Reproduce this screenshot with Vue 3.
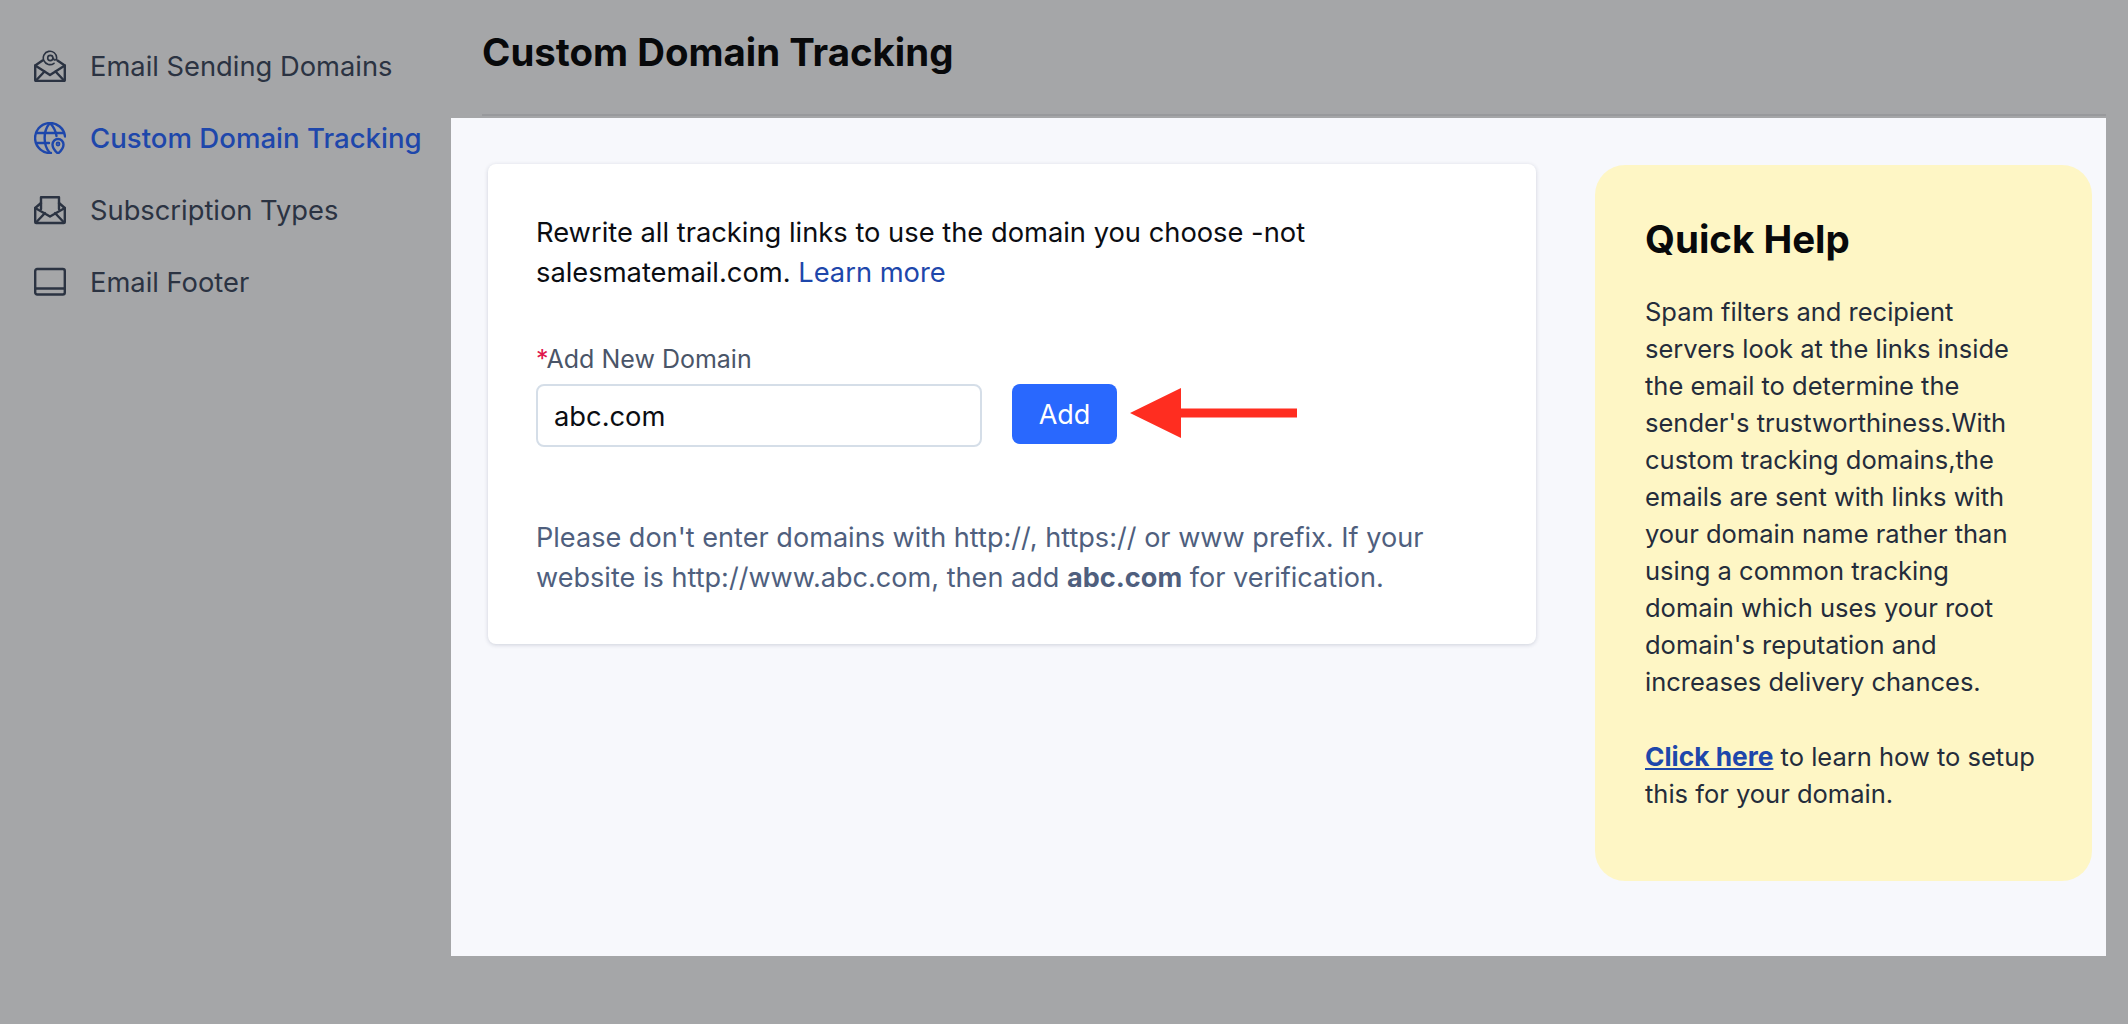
<script setup>
const helpText = "Spam filters and recipient servers look at the links inside the email to determine the sender's trustworthiness.With custom tracking domains,the emails are sent with links with your domain name rather than using a common tracking domain which uses your root domain's reputation and increases delivery chances."
</script>

<template>
  <div class="page">
    <aside class="sidebar">
      <a class="nav-item">
        <svg class="nav-icon" viewBox="0 0 32 32" fill="none" stroke="currentColor" stroke-width="2.400" stroke-linejoin="round" stroke-linecap="round">
          <path d="M8.500 10.500 1.200 15.500V30a1 1 0 0 0 1 1h27.600a1 1 0 0 0 1-1V15.500l-7.300-5" />
          <path d="M1.200 15.500 16 25l14.800-9.500" />
          <path d="M2 30.500 10.500 21.500M30 30.500 21.500 21.500" />
          <path d="M20 13.300A6.700 6.700 0 1 1 22.700 8c0 2.500-3.200 2.700-3.200 .2" stroke-width="1.600" />
          <circle cx="16.300" cy="8" r="2.600" stroke-width="1.600" />
        </svg>
        <span>Email Sending Domains</span>
      </a>
      <a class="nav-item active">
        <svg class="nav-icon" viewBox="0 0 32 32" fill="none" stroke="currentColor" stroke-width="2.400" stroke-linejoin="round" stroke-linecap="round">
          <path d="M17 31A15 15 0 1 1 31 14.500" />
          <path d="M2 11h28M2 21h13" />
          <path d="M15.500 1.500C9 9 9 23 15.500 30.500" />
          <path d="M16.500 1.500C20 5.500 22 10 22.500 14" />
          <path d="M24 31.500s-5.500-4.500-5.500-9a5.500 5.500 0 0 1 11 0c0 4.500-5.500 9-5.500 9Z" />
          <circle cx="24" cy="22" r="1.500" stroke-width="1.800" />
        </svg>
        <span>Custom Domain Tracking</span>
      </a>
      <a class="nav-item">
        <svg class="nav-icon" viewBox="0 0 32 28" fill="none" stroke="currentColor" stroke-width="2.400" stroke-linejoin="round" stroke-linecap="round">
          <path d="M7 13V1.200h18V13" />
          <path d="M7 7l-5.800 5v14a1 1 0 0 0 1 1h27.600a1 1 0 0 0 1-1V12L25 7" />
          <path d="M1.200 12 16 20.500 30.800 12M2 26.500 11 17M30 26.500 21 17" />
        </svg>
        <span>Subscription Types</span>
      </a>
      <a class="nav-item">
        <svg class="nav-icon" viewBox="0 0 32 28" fill="none" stroke="currentColor" stroke-width="2.400" stroke-linejoin="round" stroke-linecap="round">
          <rect x="1.200" y="1" width="29.600" height="25.500" rx="2" />
          <path d="M1.200 20.500h29.600" />
        </svg>
        <span>Email Footer</span>
      </a>
    </aside>

    <main class="main">
      <header class="top">
        <h1>Custom Domain Tracking</h1>
      </header>
      <div class="panel">
        <section class="card">
          <p class="intro">
            Rewrite all tracking links to use the domain you choose -not salesmatemail.com.
            <a class="link">Learn more</a>
          </p>
          <label class="field-label"><span class="req">*</span>Add New Domain</label>
          <div class="add-row">
            <input class="domain-input" type="text" value="abc.com" />
            <button type="button" class="add-btn">Add</button>
            <svg class="arrow" width="167" height="50" viewBox="0 0 167 50">
              <path d="M0 25 51 0V20.500H167V29.500H51V50Z" fill="#ff2d20" />
            </svg>
          </div>
          <p class="note">
            Please don't enter domains with http://, https:// or www prefix. If your website is
            http://www.abc.com, then add <b>abc.com</b> for verification.
          </p>
        </section>
        <aside class="help">
          <h2>Quick Help</h2>
          <p>{{ helpText }}</p>
          <p><a class="help-link">Click here</a> to learn how to setup this for your domain.</p>
        </aside>
      </div>
    </main>
  </div>
</template>

<style>
html,
body {
  margin: 0;
  background: #a5a6a8;
}
</style>

<style scoped>
.page {
  display: flex;
  width: 2128px;
  height: 1024px;
  overflow: hidden;
  background: #a5a6a8;
  font-family: Inter, "Liberation Sans", sans-serif;
  color: #242c3b;
}

.sidebar {
  width: 451px;
  flex: none;
  padding-top: 30px;
  box-sizing: border-box;
}

.nav-item {
  display: flex;
  align-items: center;
  height: 72px;
  padding-left: 34px;
  font-size: 27.300px;
  color: #2b3342;
}

.nav-item.active {
  color: #1e47ab;
  font-size: 27.600px;
  font-weight: 500;
}

.nav-icon {
  width: 32px;
  height: 32px;
  flex: none;
  margin-right: 24px;
}

.main {
  width: 1655px;
  display: flex;
  flex-direction: column;
}

.top {
  height: 116px;
  margin-left: 31px;
  border-bottom: 2px solid #98999c;
  box-sizing: border-box;
  display: flex;
  align-items: center;
}

.top h1 {
  margin: 0 0 10px;
  font-size: 38.400px;
  font-weight: 650;
  color: #08090b;
}

.panel {
  margin-top: 2px;
  height: 838px;
  background: #f7f8fc;
  display: flex;
  align-items: flex-start;
  padding: 46px 14px 0 37px;
  box-sizing: border-box;
}

.card {
  width: 1048px;
  height: 480px;
  flex: none;
  box-sizing: border-box;
  padding: 49px 48px 0;
  background: #fff;
  border-radius: 8px;
  box-shadow: 0 1px 4px rgba(30, 40, 70, 0.18);
}

.intro {
  margin: 0 0 50px;
  font-size: 27.300px;
  line-height: 40px;
  color: #0b0d12;
}

.link {
  color: #1e47ab;
}

.field-label {
  display: block;
  font-size: 25px;
  line-height: 32px;
  color: #4a5568;
}

.req {
  color: #e0144c;
}

.add-row {
  display: flex;
  align-items: flex-start;
  margin-top: 9px;
}

.domain-input {
  width: 446px;
  height: 63px;
  box-sizing: border-box;
  padding: 1px 16px 0;
  border: 2px solid #d5dee8;
  border-radius: 8px;
  background: #fff;
  font-family: inherit;
  font-size: 27.300px;
  color: #0b0d12;
  outline: none;
}

.add-btn {
  width: 105px;
  height: 60px;
  margin-left: 30px;
  border: 0;
  border-radius: 8px;
  background: #2968fe;
  color: #fff;
  font-family: inherit;
  font-size: 27px;
  font-weight: 400;
}

.arrow {
  margin: 4px 0 0 13px;
  flex: none;
}

.note {
  margin: 71px 0 0;
  font-size: 27.100px;
  line-height: 39.600px;
  color: #4f5f7e;
}

.note b {
  font-weight: 700;
}

.help {
  width: 497px;
  height: 716px;
  flex: none;
  margin: 1px 0 0 59px;
  box-sizing: border-box;
  padding: 50px 50px 0;
  background: #fef6c5;
  border-radius: 30px;
}

.help h2 {
  margin: 0 0 30px;
  font-size: 38.500px;
  line-height: 48px;
  font-weight: 650;
  color: #08090b;
}

.help p {
  margin: 0 0 38px;
  font-size: 25.500px;
  line-height: 37px;
  color: #242c3b;
}

.help-link {
  font-size: 26.300px;
  font-weight: 700;
  color: #1e47ab;
  text-decoration: underline;
}
</style>
